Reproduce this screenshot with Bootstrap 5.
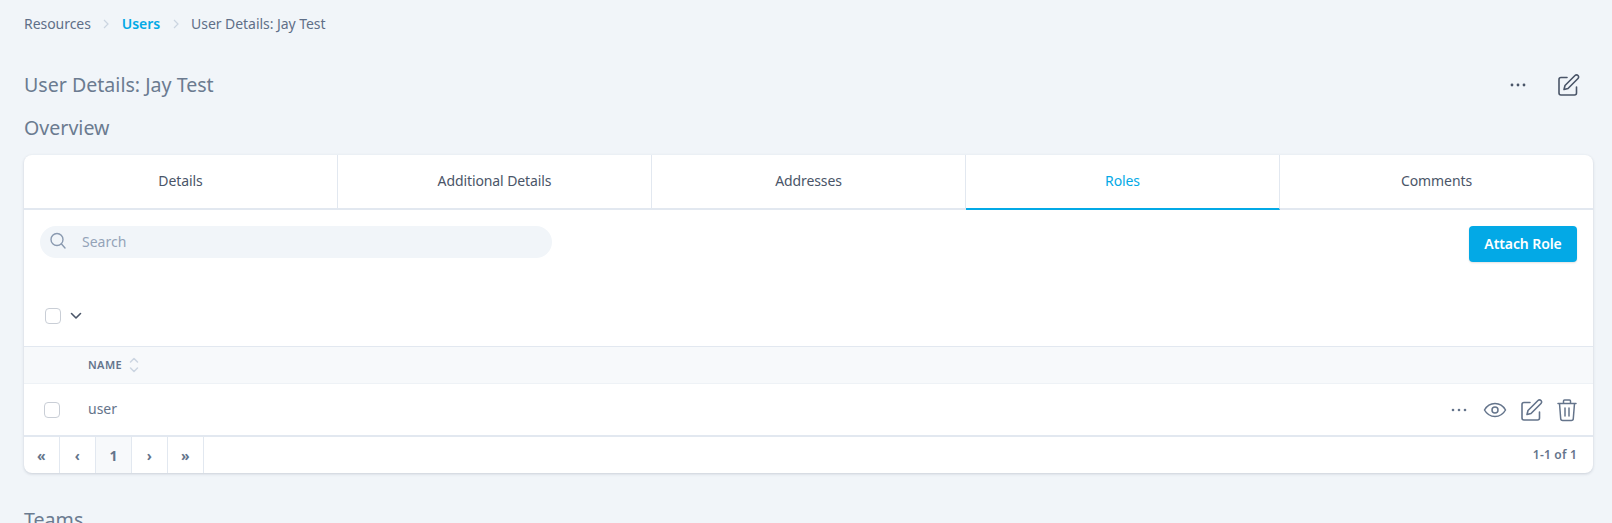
<!DOCTYPE html>
<html lang="en">

<head>
  <meta charset="UTF-8">
  <title>User Details: Jay Test</title>

  <link href="https://cdn.jsdelivr.net/npm/bootstrap@5.3.0/dist/css/bootstrap.min.css" rel="stylesheet">

  <style>
    html, body {
      height: 523px;
      overflow: hidden;
    }

    body {
      font-family: "Noto Sans", sans-serif;
      background-color: #f1f5f9;
      color: #5f6f88;
      padding: 0 19px 0 24px;
    }

    .crumbs {
      height: 47px;
      font-size: 14px;
      letter-spacing: -.05px;
      gap: 11.5px;
    }

    .crumbs a {
      color: #03a9e6;
      font-weight: 600;
      text-decoration: none;
    }

    .page-head {
      height: 67px;
      padding-top: 20px;
    }

    .page-title {
      font-size: 19.6px;
      font-weight: 400;
      line-height: 36px;
      margin: 0;
      color: #6b7b90;
    }

    .head-tools {
      gap: 26px;
      margin-right: 13px;
    }

    .sect-title {
      font-size: 19.6px;
      font-weight: 400;
      line-height: 28px;
      margin: 0;
      color: #6b7b90;
    }

    .over-title {
      height: 41px;
    }

    .main-panel {
      height: 318px;
      background: #fff;
      border-radius: 8px;
      box-shadow: 0 1px 3px rgba(60, 75, 100, .22);
      overflow: hidden;
      margin-bottom: 33px;
    }

    .tab-row {
      height: 55px;
      border-bottom: 2px solid #e2e8f0;
    }

    .tab-cell {
      flex: 1 1 0;
      font-size: 14px;
      color: #4a5568;
      border-right: 1px solid #e2e8f0;
      letter-spacing: -.1px;
      padding-bottom: 2px;
    }

    .tab-cell:last-child {
      border-right: 0;
    }

    .tab-on {
      color: #03a9e6;
      border-bottom: 2px solid #03a9e6;
      margin-bottom: -2px;
    }

    .tool-row {
      padding: 16px 16px 0;
      height: 81px;
    }

    .search-box {
      width: 512px;
      height: 32px;
      background: #f1f5f9;
      border-radius: 16px;
      padding: 0 0 2px 9px;
      gap: 15px;
      font-size: 14px;
      color: #94a3b8;
    }

    .attach-btn {
      width: 108px;
      height: 36px;
      padding: 0 0 2px;
      background: #03a9e6;
      border: 0;
      border-radius: 4px;
      color: #fff;
      font-size: 14px;
      font-weight: 600;
      letter-spacing: -.1px;
      box-shadow: 0 1px 2px rgba(0, 0, 0, .12);
    }

    .check-box {
      width: 16px;
      height: 16px;
      border: 1px solid #c9ced6;
      border-radius: 4px;
      background: #fff;
    }

    .select-row {
      height: 55px;
      padding: 0 0 5px 21px;
      gap: 9px;
    }

    .head-row {
      height: 38px;
      background: #f7f9fb;
      border-top: 1px solid #e2e8f0;
      border-bottom: 1px solid #eef2f6;
      padding-left: 64px;
      gap: 7px;
      font-size: 11px;
      font-weight: 600;
      letter-spacing: .4px;
      color: #64748b;
    }

    .user-row {
      height: 53px;
      border-bottom: 2px solid #e2e8f0;
      padding: 0 14px 0 20px;
      font-size: 14px;
      color: #64748b;
    }

    .user-name {
      margin-left: 28px;
      padding-bottom: 2px;
    }

    .row-tools {
      gap: 12px;
    }

    .pager-row {
      height: 36px;
      font-size: 12px;
      font-weight: 600;
      letter-spacing: .2px;
      color: #64748b;
      padding-right: 16px;
    }

    .pager-cell {
      width: 36px;
      height: 100%;
      border-right: 1px solid #e2e8f0;
      font-size: 14px;
      font-weight: 700;
    }

    .pager-on {
      background: #f7f9fb;
    }
  </style>
</head>

<body>
  <nav class="crumbs d-flex align-items-center">
    <span>Resources</span>
    <svg width="8" height="10" viewBox="0 0 8 10" fill="none" stroke="#cbd5e1" stroke-width="1.2"><path d="M2 1l4 4-4 4"/></svg>
    <a href="#">Users</a>
    <svg width="8" height="10" viewBox="0 0 8 10" fill="none" stroke="#cbd5e1" stroke-width="1.2"><path d="M2 1l4 4-4 4"/></svg>
    <span>User Details: Jay Test</span>
  </nav>

  <div class="page-head d-flex justify-content-between align-items-start">
    <h1 class="page-title">User Details: Jay Test</h1>
    <div class="head-tools d-flex align-items-center">
      <svg width="24" height="36" viewBox="0 0 24 36" fill="#4a5568"><circle cx="6" cy="18" r="1.4"/><circle cx="12" cy="18" r="1.4"/><circle cx="18" cy="18" r="1.4"/></svg>
      <svg width="24" height="36" viewBox="0 0 24 24" fill="none" stroke="#4a5568" stroke-width="1.6" stroke-linecap="round" stroke-linejoin="round"><path d="M11 4.500H5a2 2 0 0 0-2 2V20a2 2 0 0 0 2 2h13.500a2 2 0 0 0 2-2v-6"/><path d="M19 2.500a2.100 2.100 0 0 1 3 3L12 15.500l-4 1 1-4z"/></svg>
    </div>
  </div>

  <div class="over-title">
    <h2 class="sect-title">Overview</h2>
  </div>

  <div class="main-panel">
    <div class="tab-row d-flex">
      <div class="tab-cell d-flex align-items-center justify-content-center">Details</div>
      <div class="tab-cell d-flex align-items-center justify-content-center">Additional Details</div>
      <div class="tab-cell d-flex align-items-center justify-content-center">Addresses</div>
      <div class="tab-cell tab-on d-flex align-items-center justify-content-center">Roles</div>
      <div class="tab-cell d-flex align-items-center justify-content-center">Comments</div>
    </div>

    <div class="tool-row d-flex justify-content-between align-items-start">
      <div class="search-box d-flex align-items-center">
        <svg width="18" height="18" viewBox="0 0 18 18" fill="none" stroke="#8a9ab0" stroke-width="1.4" stroke-linecap="round"><circle cx="8" cy="7.500" r="6"/><path d="M12.500 12l3.500 4"/></svg>
        <span>Search</span>
      </div>
      <button class="attach-btn btn" type="button">Attach Role</button>
    </div>

    <div class="select-row d-flex align-items-center">
      <span class="check-box d-block"></span>
      <svg width="12" height="8" viewBox="0 0 12 8" fill="none" stroke="#4a5568" stroke-width="1.6" stroke-linecap="round" stroke-linejoin="round"><path d="M1.500 1.500L6 6l4.500-4.500"/></svg>
    </div>

    <div class="head-row d-flex align-items-center">
      <span>NAME</span>
      <svg width="10" height="16" viewBox="0 0 10 16" fill="none" stroke="#cbd5e1" stroke-width="1.5" stroke-linecap="round" stroke-linejoin="round"><path d="M1.500 5L5 1.500 8.500 5"/><path d="M1.500 11L5 14.500 8.500 11"/></svg>
    </div>

    <div class="user-row d-flex align-items-center">
      <span class="check-box d-block"></span>
      <span class="user-name">user</span>
      <div class="row-tools d-flex align-items-center ms-auto">
        <svg width="24" height="24" viewBox="0 0 24 24" fill="#64748b"><circle cx="6" cy="12" r="1.300"/><circle cx="12" cy="12" r="1.300"/><circle cx="18" cy="12" r="1.300"/></svg>
        <svg width="24" height="24" viewBox="0 0 24 24" fill="none" stroke="#64748b" stroke-width="1.500"><path d="M1.500 12C4 7.500 7.500 5.500 12 5.500S20 7.500 22.500 12C20 16.500 16.500 18.500 12 18.500S4 16.500 1.500 12z"/><circle cx="12" cy="12" r="3"/></svg>
        <svg width="24" height="24" viewBox="0 0 24 24" fill="none" stroke="#64748b" stroke-width="1.600" stroke-linecap="round" stroke-linejoin="round"><path d="M11 4.500H5a2 2 0 0 0-2 2V20a2 2 0 0 0 2 2h13.500a2 2 0 0 0 2-2v-6"/><path d="M19 2.500a2.100 2.100 0 0 1 3 3L12 15.500l-4 1 1-4z"/></svg>
        <svg width="24" height="24" viewBox="0 0 24 24" fill="none" stroke="#64748b" stroke-width="1.500" stroke-linecap="round" stroke-linejoin="round"><path d="M3 5.500h18M8.500 5.500V3a1 1 0 0 1 1-1h5a1 1 0 0 1 1 1v2.500M4.500 5.500l1.200 15a2 2 0 0 0 2 2h8.600a2 2 0 0 0 2-2l1.200-15M10 10v8M14 10v8"/></svg>
      </div>
    </div>

    <div class="pager-row d-flex align-items-center">
      <span class="pager-cell d-flex align-items-center justify-content-center">«</span>
      <span class="pager-cell d-flex align-items-center justify-content-center">‹</span>
      <span class="pager-cell pager-on d-flex align-items-center justify-content-center">1</span>
      <span class="pager-cell d-flex align-items-center justify-content-center">›</span>
      <span class="pager-cell d-flex align-items-center justify-content-center">»</span>
      <span class="ms-auto">1-1 of 1</span>
    </div>
  </div>

  <h2 class="sect-title">Teams</h2>

  <script src="https://cdn.jsdelivr.net/npm/bootstrap@5.3.0/dist/js/bootstrap.bundle.min.js"></script>
</body>

</html>
